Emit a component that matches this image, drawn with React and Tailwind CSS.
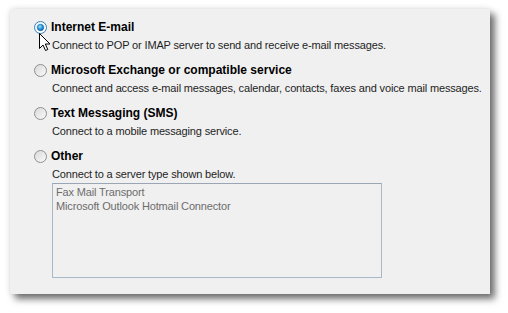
import React from "react";

function Radio({ checked }) {
  return (
    <svg width="13" height="13" viewBox="0 0 13 13" className="shrink-0">
      <defs>
        <linearGradient id={checked ? "rgc" : "rgu"} x1="0" y1="0" x2="1" y2="1">
          <stop offset="0" stopColor={checked ? "#e6f4fc" : "#d8d8d8"} />
          <stop offset="1" stopColor={checked ? "#ffffff" : "#fbfbfb"} />
        </linearGradient>
        <radialGradient id="dot" cx="0.4" cy="0.35" r="0.7">
          <stop offset="0" stopColor="#a9e1fb" />
          <stop offset="0.5" stopColor="#2aa0e0" />
          <stop offset="1" stopColor="#0d5aa6" />
        </radialGradient>
      </defs>
      <circle cx="6.5" cy="6.5" r="6" fill={`url(#${checked ? "rgc" : "rgu"})`} stroke={checked ? "#3c7fb1" : "#8e8f8f"} strokeWidth="1" />
      {checked && <circle cx="6.5" cy="6.5" r="3.2" fill="url(#dot)" stroke="#1a5f9e" strokeWidth="0.6" />}
    </svg>
  );
}

function Option({ checked, title, desc, children }) {
  return (
    <div className="flex flex-col">
      <div className="flex items-center h-[16px] gap-[4px]">
        <Radio checked={checked} />
        <span className="font-bold text-black text-[12px] leading-[16px] whitespace-nowrap">{title}</span>
      </div>
      <div className="ml-[18px] mt-[2px] h-[16px] text-[11px] tracking-[-0.15px] leading-[16px] text-[#1e1e1e] whitespace-nowrap">{desc}</div>
      {children}
    </div>
  );
}

export default function App() {
  return (
    <div
      className="w-[508px] h-[313px] bg-white pt-[9px] pl-[10px] overflow-hidden"
      style={{ fontFamily: '"Liberation Sans", Arial, sans-serif' }}
    >
      <div className="relative w-[480px] h-[285px] bg-[#f0f0f0] pt-[10px] pl-[24px] flex flex-col gap-[9px] shadow-[5px_5px_7px_rgba(0,0,0,0.55),0_0_6px_rgba(0,0,0,0.12)]">
        <Option checked title="Internet E-mail" desc="Connect to POP or IMAP server to send and receive e-mail messages." />
        <Option title="Microsoft Exchange or compatible service" desc="Connect and access e-mail messages, calendar, contacts, faxes and voice mail messages." />
        <Option title="Text Messaging (SMS)" desc="Connect to a mobile messaging service." />
        <Option title="Other" desc="Connect to a server type shown below.">
          <div className="ml-[18px] mt-[1px] w-[330px] h-[95px] border border-[#a9b8c9] border-t-[#9aa6b3] bg-[#f0f0f0] pl-[3px] pt-[1px] text-[11px] tracking-[-0.15px] leading-[14px] text-[#6d6d6d]">
            <div>Fax Mail Transport</div>
            <div>Microsoft Outlook Hotmail Connector</div>
          </div>
        </Option>
        <svg className="absolute left-[29px] top-[24px]" width="12" height="19" viewBox="0 0 12 19">
          <path d="M0.5 0.5 L0.5 15.5 L4 12 L6.5 17.5 L8.8 16.5 L6.3 11 L11 11 Z" fill="#ffffff" stroke="#000000" strokeWidth="1" strokeLinejoin="miter" />
        </svg>
      </div>
    </div>
  );
}
